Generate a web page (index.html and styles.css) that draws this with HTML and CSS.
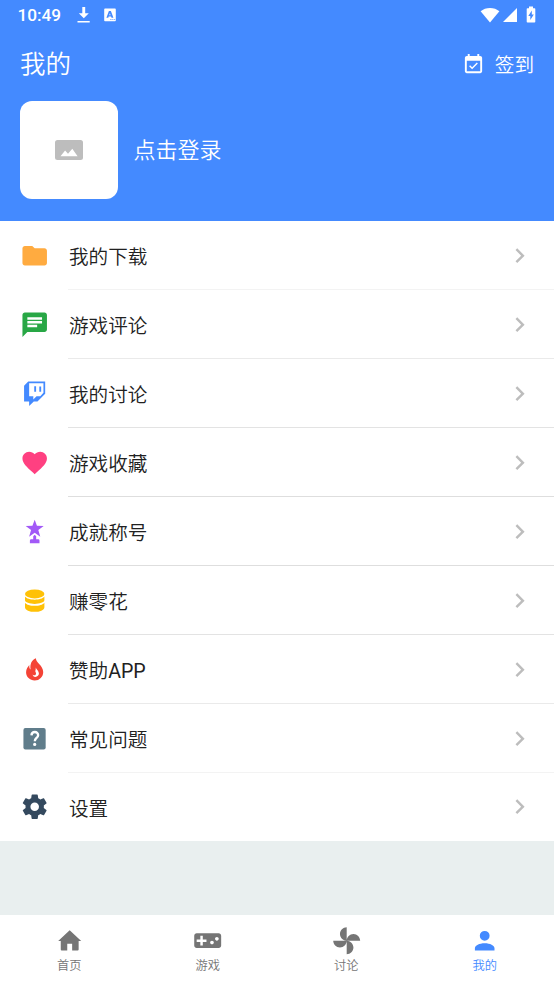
FILE: index.html
```html
<!DOCTYPE html>
<html lang="zh-CN">
<head>
<meta charset="utf-8">
<title>我的</title>
<link rel="stylesheet" href="styles.css">
</head>
<body>
<header class="header">
  <div class="status">
    <span class="time">10:49</span>
    <svg class="st-download" width="14" height="18" viewBox="0 0 14 18"><path d="M5.3 1h2.900v6.200h3.600L6.800 12.300 1.800 7.200h3.500zM.5 15h12.200v1.600H.5z"/></svg>
    <svg class="st-lang" width="12" height="14" viewBox="0 0 12 14"><path fill-rule="evenodd" d="M1 .6h10q.8 0 .8.8v11q0 .8-.8.8H1q-.8 0-.8-.8v-11q0-.8.8-.8zM4.900 3 2.400 9.800h1.900l.4-1.300h2.400l.4 1.300h1.900L6.900 3zm1 2.200.7 2H5.200zM6.300 11.200v.8h1.200v-.8zm2 0v.8h1.100v-.8zm1.900 0v.8h.9v-.8z"/></svg>
    <span class="spacer"></span>
    <svg class="st-wifi" width="20" height="16" viewBox="0 0 20 16"><path d="M.6 4.300C5.500-.2 14.500-.2 19.400 4.300L10 15.600z"/></svg>
    <svg class="st-signal" width="14" height="14" viewBox="0 0 14 14"><path d="M14 0v14H0z"/></svg>
    <svg class="st-battery" width="10" height="17" viewBox="0 0 10 17"><path fill-rule="evenodd" d="M3 .5h4v1.700h1.500q.8 0 .8.8v12.700q0 .8-.8.8h-7q-.8 0-.8-.8V3q0-.8.8-.8H3zM5.800 4.500 2.300 10.100h2v4l3.500-5.700h-2z"/></svg>
  </div>
  <div class="titlebar">
    <h1>我的</h1>
    <span class="spacer"></span>
    <svg class="calendar" width="23" height="23" viewBox="0 0 24 24"><path d="M16.530 11.060 15.470 10l-4.880 4.880-2.120-2.120-1.060 1.060L10.590 17l5.940-5.940zM19 3h-1V1h-2v2H8V1H6v2H5c-1.110 0-1.990.9-1.990 2L3 19c0 1.100.89 2 2 2h14c1.100 0 2-.9 2-2V5c0-1.100-.9-2-2-2zm0 16H5V8h14v11z"/></svg>
    <span class="sign">签到</span>
  </div>
  <div class="profile">
    <div class="avatar">
      <svg width="28" height="20" viewBox="0 0 28 20"><rect width="28" height="20" rx="2.500" fill="#bdbdbd"/><path fill="#fff" d="m5.500 16.300 4.600-5.900 2.900 3.300 4.300-5 5.300 7.600z"/></svg>
    </div>
    <span class="login">点击登录</span>
  </div>
</header>

<main class="menu">
  <div class="row">
    <svg class="icon" viewBox="0 0 24 24" fill="#ffab40"><path d="M10 4H4c-1.100 0-2 .9-2 2v12c0 1.100.9 2 2 2h16c1.100 0 2-.9 2-2V8c0-1.100-.9-2-2-2h-8z"/></svg>
    <div class="cell"><span>我的下载</span><svg class="chev" viewBox="0 0 24 24"><path d="M10 6 8.590 7.410 13.170 12l-4.580 4.590L10 18l6-6z"/></svg></div>
  </div>
  <div class="row">
    <svg class="icon" viewBox="0 0 24 24" fill="#28a745"><path d="M20 2H4c-1.100 0-2 .9-2 2v18l4-4h14c1.100 0 2-.9 2-2V4c0-1.100-.9-2-2-2zM6 6h12v2H6zm8 8H6v-2h8zm4-3H6V9h12z"/></svg>
    <div class="cell"><span>游戏评论</span><svg class="chev" viewBox="0 0 24 24"><path d="M10 6 8.590 7.410 13.170 12l-4.580 4.590L10 18l6-6z"/></svg></div>
  </div>
  <div class="row">
    <svg class="icon" viewBox="-51 -51 614 614" fill="#448aff"><path d="M391.170 103.470h-38.630v109.700h38.630zM285 103h-38.630v109.750H285zM120.830 0 34 91.420v329.160h106V512l96.670-91.420h77.250L475 256V0zm318 237.750-67 73.120h-77.220l-67.600 64v-64H140.140V36.580h298.700z"/></svg>
    <div class="cell"><span>我的讨论</span><svg class="chev" viewBox="0 0 24 24"><path d="M10 6 8.590 7.410 13.170 12l-4.580 4.590L10 18l6-6z"/></svg></div>
  </div>
  <div class="row">
    <svg class="icon" viewBox="0 0 24 24" fill="#ff4081"><path d="m12 21.350-1.450-1.320C5.400 15.360 2 12.280 2 8.500 2 5.420 4.420 3 7.500 3c1.740 0 3.410.81 4.500 2.090C13.090 3.810 14.760 3 16.500 3 19.580 3 22 5.420 22 8.500c0 3.780-3.400 6.860-8.550 11.540z"/></svg>
    <div class="cell"><span>游戏收藏</span><svg class="chev" viewBox="0 0 24 24"><path d="M10 6 8.590 7.410 13.170 12l-4.580 4.590L10 18l6-6z"/></svg></div>
  </div>
  <div class="row">
    <svg class="icon" viewBox="0 0 30 30" fill="#a259f7"><path d="m15 2.700 2.300 6.200 6.900.2-5.500 4.200 2 6.800-5.700-4-5.700 4 2-6.800-5.500-4.200 6.900-.2zM15 18.100l1.500 1.500v3h2q1.400 0 1.400 1.300v2.900h-9.800v-2.900q0-1.300 1.400-1.300h2v-3z"/></svg>
    <div class="cell"><span>成就称号</span><svg class="chev" viewBox="0 0 24 24"><path d="M10 6 8.590 7.410 13.170 12l-4.580 4.590L10 18l6-6z"/></svg></div>
  </div>
  <div class="row">
    <svg class="icon" viewBox="0 0 30 30" fill="#ffc107"><ellipse cx="15" cy="8.100" rx="9.900" ry="4.600"/><path d="M5.100 10.800C8 15 22 15 24.900 10.800v3.600c0 5.200-19.800 5.200-19.800 0zM5.100 17.100c2.900 4.200 16.900 4.200 19.800 0v4.500c0 6.400-19.800 6.400-19.800 0z"/></svg>
    <div class="cell"><span>赚零花</span><svg class="chev" viewBox="0 0 24 24"><path d="M10 6 8.590 7.410 13.170 12l-4.580 4.590L10 18l6-6z"/></svg></div>
  </div>
  <div class="row">
    <svg class="icon" viewBox="0 0 30 30" fill="#f44336"><path fill-rule="evenodd" d="M16.300 3.300c-.5 4.300 7.400 7.300 7.400 14 0 5-3.800 8.700-8.700 8.700s-8.800-3.400-8.800-8.300c0-3.300 1.900-5.800 3.300-7.500-.1 2.200.1 3.800 1.300 4.500C10 9.700 11.700 5 16.300 3.300zM16 12.800c.4 2.300-.6 3.200-.3 4.400 1 1.300.8 2.700-.2 3.400-.9.400-1.900.1-2.600-.7.200 1.600 1.200 2.500 2.700 2.500 2.200 0 3.800-1.600 3.700-3.700-.2-2.400-2.300-3.900-3.300-5.900z"/></svg>
    <div class="cell"><span>赞助<span class="latin">APP</span></span><svg class="chev" viewBox="0 0 24 24"><path d="M10 6 8.590 7.410 13.170 12l-4.580 4.590L10 18l6-6z"/></svg></div>
  </div>
  <div class="row">
    <svg class="icon" viewBox="0 0 30 30"><rect x="3.500" y="4" width="22.700" height="22" rx="2" fill="#607d8b"/><path d="M11.700 11.600c.2-4.600 6.900-4.500 6.800-.2 0 2.800-3.400 3-3.400 6.100" fill="none" stroke="#fff" stroke-width="2.400"/><circle cx="15" cy="20.800" r="1.600" fill="#fff"/></svg>
    <div class="cell"><span>常见问题</span><svg class="chev" viewBox="0 0 24 24"><path d="M10 6 8.590 7.410 13.170 12l-4.580 4.590L10 18l6-6z"/></svg></div>
  </div>
  <div class="row">
    <svg class="icon" viewBox="0 0 24 24" fill="#34495e"><path d="M19.430 12.980c.04-.32.07-.64.07-.98s-.03-.66-.07-.98l2.110-1.650c.19-.15.24-.42.12-.64l-2-3.460c-.12-.22-.39-.3-.61-.22l-2.490 1c-.52-.4-1.080-.73-1.690-.98l-.38-2.650C14.460 2.180 14.250 2 14 2h-4c-.25 0-.46.18-.49.42l-.38 2.650c-.61.25-1.170.59-1.690.98l-2.490-1c-.23-.09-.49 0-.61.22l-2 3.460c-.13.22-.07.49.12.64l2.110 1.650c-.04.32-.07.65-.07.98s.03.66.07.98l-2.110 1.650c-.19.15-.24.42-.12.64l2 3.460c.12.22.39.3.61.22l2.490-1c.52.4 1.080.73 1.690.98l.38 2.650c.03.24.24.42.49.42h4c.25 0 .46-.18.49-.42l.38-2.650c.61-.25 1.170-.59 1.690-.98l2.490 1c.23.09.49 0 .61-.22l2-3.460c.12-.22.07-.49-.12-.64zM12 15.500c-1.930 0-3.500-1.570-3.500-3.500s1.570-3.500 3.500-3.500 3.500 1.570 3.500 3.500-1.570 3.500-3.500 3.500z"/></svg>
    <div class="cell"><span>设置</span><svg class="chev" viewBox="0 0 24 24"><path d="M10 6 8.590 7.410 13.170 12l-4.580 4.590L10 18l6-6z"/></svg></div>
  </div>
</main>

<nav class="tabs">
  <div class="tab"><svg viewBox="0 0 24 24"><path d="M10 20v-5.600h4V20h4.500q.8 0 .8-.8V12.300h2.100L12 3.500 2.600 12.300h2.100v6.900q0 .8.8.8z"/></svg><span>首页</span></div>
  <div class="tab"><svg viewBox="0 0 24 24"><path d="M21 6H3c-1.100 0-2 .9-2 2v8c0 1.100.9 2 2 2h18c1.100 0 2-.9 2-2V8c0-1.100-.9-2-2-2zm-10 7H8v3H6v-3H3v-2h3V8h2v3h3zm4.500 2c-.83 0-1.500-.67-1.500-1.500s.67-1.500 1.500-1.500 1.500.67 1.500 1.500-.67 1.500-1.500 1.500zm4-3c-.83 0-1.500-.67-1.500-1.500S18.670 9 19.500 9s1.500.67 1.500 1.500-.67 1.500-1.500 1.500z"/></svg><span>游戏</span></div>
  <div class="tab"><svg viewBox="0 0 24 24"><path d="M12 12c0-3 2.500-5.500 5.500-5.500S23 9 23 12H12zm0 0c0 3-2.500 5.500-5.500 5.500S1 15 1 12h11zm0 0c-3 0-5.500-2.500-5.500-5.500S9 1 12 1v11zm0 0c3 0 5.500 2.500 5.500 5.500S15 23 12 23V12z"/></svg><span>讨论</span></div>
  <div class="tab active"><svg viewBox="0 0 24 24"><path d="M12 4a4 4 0 1 1 0 8 4 4 0 0 1 0-8zm0 10c4.420 0 8 1.790 8 4v2H4v-2c0-2.210 3.580-4 8-4z"/></svg><span>我的</span></div>
</nav>
</body>
</html>
```
FILE: styles.css
```css
* { box-sizing: border-box; }
body {
  margin: 0;
  height: 984px;
  display: flex;
  flex-direction: column;
  overflow: hidden;
  background: #e9efef;
  color: #212121;
  font-family: Roboto, "Noto Sans CJK SC", sans-serif;
  font-weight: 350;
}
svg { display: block; flex: none; }
.spacer { flex: 1; }

.header { height: 221px; background: #448aff; color: #fff; }
.header svg { fill: #fff; }
.status { height: 30px; display: flex; align-items: center; padding: 0 18px 0 17.500px; }
.time { font-size: 17.200px; font-weight: 500; line-height: 30px; width: 59px; }
.st-lang { margin-left: 13.500px; }
.st-wifi { margin-top: -1px; }
.st-signal { margin-left: 3px; }
.st-battery { margin-left: 9px; margin-top: -2px; }
.titlebar { height: 67px; display: flex; align-items: center; padding: 1px 20px 0; }
h1 { margin: 0; font-size: 25.500px; font-weight: 350; line-height: 36px; }
.calendar { margin-right: 9.500px; }
.sign { font-size: 19.600px; line-height: 28px; padding-top: 4px; }
.profile { display: flex; align-items: center; padding: 4px 20px 0; gap: 15.500px; }
.avatar {
  width: 98px;
  height: 98px;
  border-radius: 12px;
  background: #fff;
  display: flex;
  align-items: center;
  justify-content: center;
}
.login { font-size: 22px; line-height: 32px; padding-top: 2px; }

.menu { height: 620px; display: grid; grid-template-rows: repeat(8, 69px) 68px; background: #fff; }
.row { display: flex; align-items: center; padding-left: 19.600px; }
.icon { width: 29.400px; height: 29.400px; margin-right: 19px; }
.cell {
  flex: 1;
  align-self: stretch;
  display: flex;
  align-items: center;
  justify-content: space-between;
  padding: 2px 19.600px 0 1px;
  border-bottom: 1px solid #e3e3e3;
  font-size: 19.600px;
}
.cell > span { margin-top: -2px; }
.latin { font-weight: 400; }
.row:nth-child(1) .cell, .row:nth-child(8) .cell { border-color: #f3f3f3; }
.row:nth-child(2) .cell, .row:nth-child(7) .cell { border-color: #eaeaea; }
.row:nth-child(4) .cell, .row:nth-child(5) .cell { border-color: #dedede; }
.row:last-child .cell { border-bottom: 0; }
.row:last-child .chev { margin-top: -2px; }
.chev { width: 29.400px; height: 29.400px; fill: #bdbdbd; }

.tabs { margin-top: auto; height: 69px; display: grid; grid-template-columns: repeat(4, 1fr); background: #fff; }
.tab { display: flex; flex-direction: column; align-items: center; padding-top: 10.500px; color: #757575; font-size: 12.250px; }
.tab svg { width: 29.400px; height: 29.400px; fill: currentColor; }
.tab span { line-height: 18px; margin-top: 2px; }
.tab.active { color: #448aff; }
```
